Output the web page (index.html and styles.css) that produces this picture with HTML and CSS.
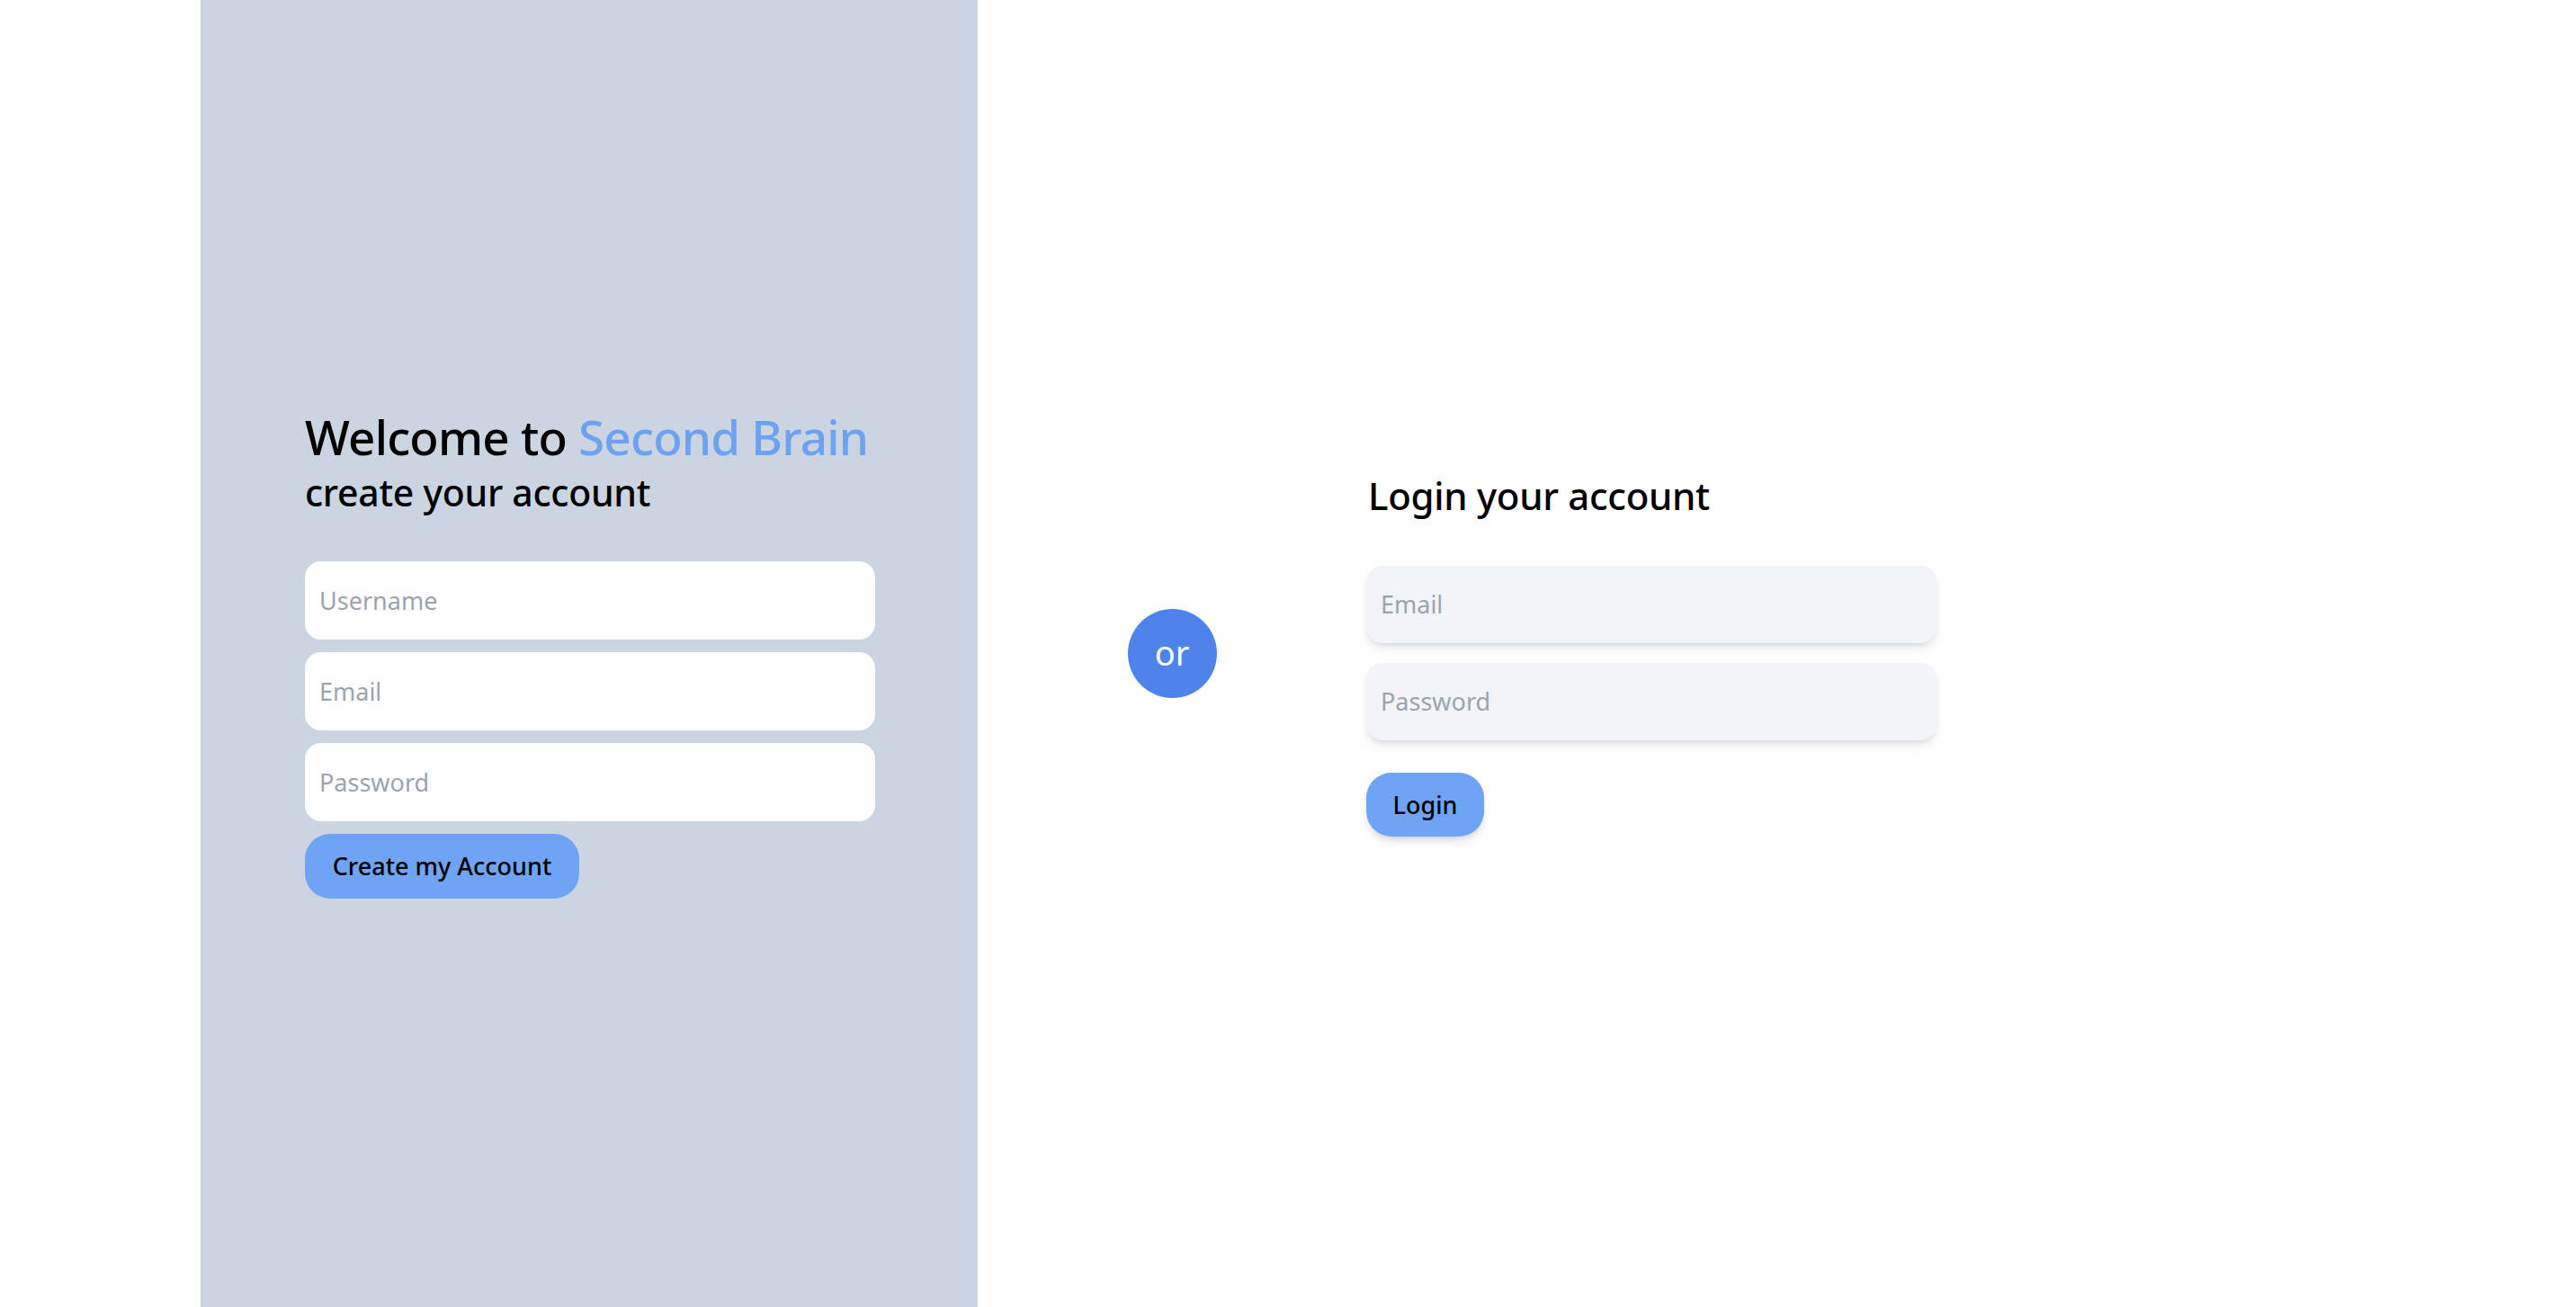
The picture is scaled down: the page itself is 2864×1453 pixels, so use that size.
FILE: index.html
```html
<!DOCTYPE html>
<html lang="en">
<head>
<meta charset="utf-8">
<title>Second Brain</title>
<link rel="stylesheet" href="styles.css">
</head>
<body>
<main class="page">
  <section class="signup">
    <div class="signup-inner">
      <h1 class="title">Welcome to <span class="brand">Second Brain</span></h1>
      <h2 class="subtitle">create your account</h2>
      <form class="form signup-form">
        <input class="field field-light" type="text" placeholder="Username">
        <input class="field field-light" type="email" placeholder="Email">
        <input class="field field-light" type="password" placeholder="Password">
        <button class="btn btn-create" type="button">Create my Account</button>
      </form>
    </div>
  </section>
  <div class="or-wrap"><div class="or">or</div></div>
  <section class="login">
    <h2 class="login-title">Login your account</h2>
    <form class="form login-form">
      <input class="field field-soft" type="email" placeholder="Email">
      <input class="field field-soft" type="password" placeholder="Password">
      <button class="btn btn-login" type="button">Login</button>
    </form>
  </section>
</main>
</body>
</html>
```

FILE: styles.css
```css
* { box-sizing: border-box; }
html, body { margin: 0; padding: 0; height: 100%; }
body {
  font-family: "Noto Sans", "Open Sans", sans-serif;
  background: #ffffff;
  color: #000;
}
.page {
  display: flex;
  height: 1453px;
  padding-left: 223px;
  align-items: stretch;
}
.signup {
  width: 864px;
  background: #cbd5e1;
  display: flex;
  align-items: center;
  padding: 0 115px 0 116px;
}
.signup-inner { width: 100%; }
.title {
  margin: 0;
  font-size: 53px;
  font-weight: 500;
  line-height: 62px;
  letter-spacing: -0.8px;
}
.brand { color: #6ea1f0; }
.subtitle {
  margin: 5px 0 52px;
  font-size: 41px;
  font-weight: 500;
  line-height: 50px;
  letter-spacing: -0.3px;
}
.form { display: flex; flex-direction: column; align-items: flex-start; }
.field {
  width: 634px;
  border: none;
  outline: none;
  border-radius: 18px;
  padding: 0 16px;
  font-family: inherit;
  font-size: 27px;
  color: #111;
}
.field::placeholder { color: #9ca3af; }
.field-light { background: #ffffff; height: 87px; margin-bottom: 14px; }
.field-soft {
  background: #f1f5f9;
  height: 86px;
  margin-bottom: 22px;
  box-shadow: 0 7px 11px -2px rgba(0,0,0,0.10), 0 3px 7px -3px rgba(0,0,0,0.10);
}
.btn {
  border: none;
  background: #6fa3f3;
  color: #000;
  font-family: inherit;
  font-size: 27px;
  font-weight: 500;
  border-radius: 28px;
  padding: 0;
  cursor: pointer;
}
.btn-create { width: 305px; height: 72px; }
.btn-login {
  width: 131px;
  height: 71px;
  margin-top: 14px;
  box-shadow: 0 7px 11px -2px rgba(0,0,0,0.12), 0 3px 7px -3px rgba(0,0,0,0.10);
}
.or-wrap {
  width: 432px;
  display: flex;
  align-items: center;
  justify-content: center;
}
.or {
  width: 99px;
  height: 99px;
  border-radius: 50%;
  background: #4f83ec;
  color: #fff;
  font-size: 38px;
  display: flex;
  align-items: center;
  justify-content: center;
  padding-bottom: 4px;
}
.login {
  display: flex;
  flex-direction: column;
  justify-content: center;
}
.login-title {
  margin: 0 0 51px 2px;
  font-size: 42px;
  font-weight: 500;
  line-height: 54px;
  letter-spacing: -0.3px;
}
```
